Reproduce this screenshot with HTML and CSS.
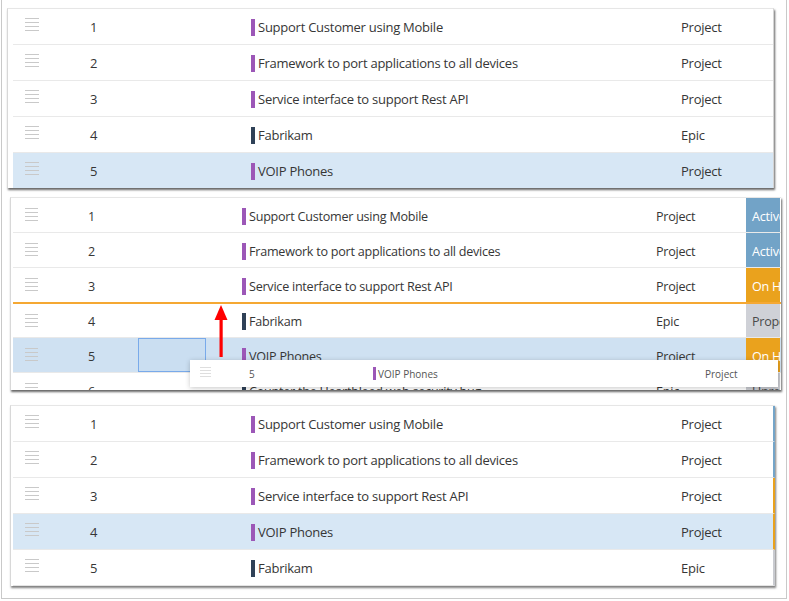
FILE: index.html
```html
<!DOCTYPE html>
<html>
<head>
<meta charset="utf-8">
<link rel="stylesheet" href="styles.css">
</head>
<body>
<div class="frame">
  <section class="shot shot-a">
    <div class="row">
      <span class="handle"><i></i><i></i><i></i><i></i></span><span class="num">1</span><span class="title"><b class="bar proj"></b>Support Customer using Mobile</span><span class="type">Project</span>
    </div>
    <div class="row">
      <span class="handle"><i></i><i></i><i></i><i></i></span><span class="num">2</span><span class="title"><b class="bar proj"></b>Framework to port applications to all devices</span><span class="type">Project</span>
    </div>
    <div class="row">
      <span class="handle"><i></i><i></i><i></i><i></i></span><span class="num">3</span><span class="title"><b class="bar proj"></b>Service interface to support Rest API</span><span class="type">Project</span>
    </div>
    <div class="row">
      <span class="handle"><i></i><i></i><i></i><i></i></span><span class="num">4</span><span class="title"><b class="bar epic"></b>Fabrikam</span><span class="type">Epic</span>
    </div>
    <div class="row selected last">
      <span class="handle"><i></i><i></i><i></i><i></i></span><span class="num">5</span><span class="title"><b class="bar proj"></b>VOIP Phones</span><span class="type">Project</span>
    </div>
  </section>

  <section class="shot shot-b">
    <div class="row">
      <span class="handle"><i></i><i></i><i></i><i></i></span><span class="num">1</span><span class="title"><b class="bar proj"></b>Support Customer using Mobile</span><span class="type">Project</span><span class="state active">Active</span>
    </div>
    <div class="row">
      <span class="handle"><i></i><i></i><i></i><i></i></span><span class="num">2</span><span class="title"><b class="bar proj"></b>Framework to port applications to all devices</span><span class="type">Project</span><span class="state active">Active</span>
    </div>
    <div class="row drop-above">
      <span class="handle"><i></i><i></i><i></i><i></i></span><span class="num">3</span><span class="title"><b class="bar proj"></b>Service interface to support Rest API</span><span class="type">Project</span><span class="state hold">On Hold</span>
    </div>
    <div class="row short">
      <span class="handle"><i></i><i></i><i></i><i></i></span><span class="num">4</span><span class="title"><b class="bar epic"></b>Fabrikam</span><span class="type">Epic</span><span class="state prop">Proposed</span>
    </div>
    <div class="row selected">
      <span class="handle"><i></i><i></i><i></i><i></i></span><span class="num">5</span><span class="title"><b class="bar proj"></b>VOIP Phones</span><span class="type">Project</span><span class="state hold">On Hold</span>
    </div>
    <div class="row">
      <span class="handle"><i></i><i></i><i></i><i></i></span><span class="num">6</span><span class="title"><b class="bar epic"></b>Counter the Heartbleed web security bug</span><span class="type">Epic</span><span class="state unrev">Unreviewed</span>
    </div>

    <div class="sel-box"></div>
    <svg class="arrow" width="14" height="52" viewBox="0 0 14 52">
      <polygon points="7,0 0.5,15 13.5,15" fill="#ff0000"/>
      <rect x="5.5" y="14" width="3.2" height="38" fill="#ff0000"/>
    </svg>
    <div class="ghost">
      <span class="handle small"><i></i><i></i><i></i><i></i></span><span class="num">5</span><span class="title"><b class="bar proj"></b>VOIP Phones</span><span class="type">Project</span>
    </div>
  </section>

  <section class="shot shot-c">
    <div class="row st-active">
      <span class="handle"><i></i><i></i><i></i><i></i></span><span class="num">1</span><span class="title"><b class="bar proj"></b>Support Customer using Mobile</span><span class="type">Project</span>
    </div>
    <div class="row st-active">
      <span class="handle"><i></i><i></i><i></i><i></i></span><span class="num">2</span><span class="title"><b class="bar proj"></b>Framework to port applications to all devices</span><span class="type">Project</span>
    </div>
    <div class="row st-hold">
      <span class="handle"><i></i><i></i><i></i><i></i></span><span class="num">3</span><span class="title"><b class="bar proj"></b>Service interface to support Rest API</span><span class="type">Project</span>
    </div>
    <div class="row selected st-hold">
      <span class="handle"><i></i><i></i><i></i><i></i></span><span class="num">4</span><span class="title"><b class="bar proj"></b>VOIP Phones</span><span class="type">Project</span>
    </div>
    <div class="row st-prop">
      <span class="handle"><i></i><i></i><i></i><i></i></span><span class="num">5</span><span class="title"><b class="bar epic"></b>Fabrikam</span><span class="type">Epic</span>
    </div>
  </section>
</div>
</body>
</html>
```

FILE: styles.css
```css
* { box-sizing: border-box; }

html, body {
  margin: 0;
  padding: 0;
  background: #ffffff;
}

body {
  width: 789px;
  height: 601px;
  overflow: hidden;
  font-family: "Open Sans", "Noto Sans", sans-serif;
  color: #363636;
}

.frame {
  margin-left: 1px;
  width: 786px;
  height: 599px;
  border-left: 1px solid #c9c9c9;
  border-right: 1px solid #c9c9c9;
  border-bottom: 1px solid #c9c9c9;
  display: flex;
  flex-direction: column;
  align-items: flex-start;
}

.shot {
  position: relative;
  background: #fff;
  border-top: 1px solid #e6e6e6;
  border-left: 1px solid #d8d8d8;
  overflow: hidden;
}

.shot-a {
  margin-top: 8px;
  margin-left: 5px;
  width: 767px;
  padding-left: 5px;
  border-right: 1px solid #d4d4d4;
  box-shadow: 1px 2px 2px rgba(0, 0, 0, 0.6);
}

.shot-b {
  margin-top: 9px;
  margin-left: 8px;
  width: 771px;
  height: 193px;
  padding-left: 2px;
  box-shadow: 1px 2px 2px rgba(0, 0, 0, 0.6);
}

.shot-c {
  margin-top: 15px;
  margin-left: 8px;
  width: 765px;
  padding-left: 2px;
  box-shadow: 1px 2px 2px rgba(0, 0, 0, 0.5);
}

.row {
  display: grid;
  grid-template-columns: 77px 161px 430px 92px;
  align-items: center;
  height: 36px;
  border-bottom: 1px solid #e9e9e9;
  font-size: 13px;
  letter-spacing: -0.25px;
  padding-top: 1px;
}

.shot-a .row.last { border-bottom: none; height: 35px; }

.row.selected { background: #d7e7f5; }

.shot-b .row {
  grid-template-columns: 75px 154px 414px 90px 34px;
  height: 35px;
  padding-top: 2px;
  font-size: 12.6px;
}
.shot-b .row.drop-above {
  height: 36px;
  border-bottom: 2px solid #f5a833;
}
.shot-b .row.short { height: 34px; }
.shot-b .row.selected { background: #cfe1f2; }

.shot-c .row {
  grid-template-columns: 77px 161px 430px 90px;
  border-right: 2px solid transparent;
}
.shot-c .row:last-child { border-bottom: 1px solid #e4e4e4; }
.row.st-active { border-right-color: #74a5c9; }
.row.st-hold { border-right-color: #eaa21d; }
.row.st-prop { border-right-color: #c9cbd0; }

.handle {
  align-self: start;
  margin-top: 8px;
  margin-left: 12px;
  width: 14px;
  display: flex;
  flex-direction: column;
  gap: 3px;
}
.handle i {
  display: block;
  height: 1px;
  background: #c9c9c9;
}
.shot-b .handle { margin-top: 8px; width: 13px; }

.title {
  display: flex;
  align-items: center;
  gap: 3px;
  white-space: nowrap;
  overflow: hidden;
}

.bar {
  display: block;
  width: 4px;
  height: 17px;
  flex: none;
}
.bar.proj { background: #9c57b7; }
.bar.epic { background: #2f4157; }

.type { white-space: nowrap; }

.state {
  align-self: stretch;
  margin-top: -2px;
  display: flex;
  align-items: center;
  padding-left: 6px;
  padding-top: 2px;
  white-space: nowrap;
  overflow: hidden;
  color: #fff;
}
.state.active { background: #72a3c7; }
.state.hold { background: #eaa21d; }
.state.prop { background: #cfd1d7; color: #4a4a4a; }
.state.unrev { background: #c9cbd0; color: #4a4a4a; }

.sel-box {
  position: absolute;
  left: 127px;
  top: 140px;
  width: 68px;
  height: 34px;
  border: 1px solid #79aaea;
  background: rgba(140, 185, 235, 0.06);
}

.arrow {
  position: absolute;
  left: 203px;
  top: 107px;
}

.ghost {
  position: absolute;
  left: 179px;
  top: 162px;
  width: 588px;
  height: 27px;
  background: #fff;
  box-shadow: 0 1px 5px rgba(0, 0, 0, 0.22);
  display: grid;
  grid-template-columns: 59px 124px 332px 73px;
  align-items: center;
  font-size: 10px;
  letter-spacing: 0;
  color: #555;
}
.ghost .handle {
  margin-left: 10px;
  margin-top: 7px;
  width: 11px;
  gap: 2px;
}
.ghost .handle i { background: #dedede; }
.ghost .bar { width: 3px; height: 13px; }
.ghost .title { gap: 2px; }
```
